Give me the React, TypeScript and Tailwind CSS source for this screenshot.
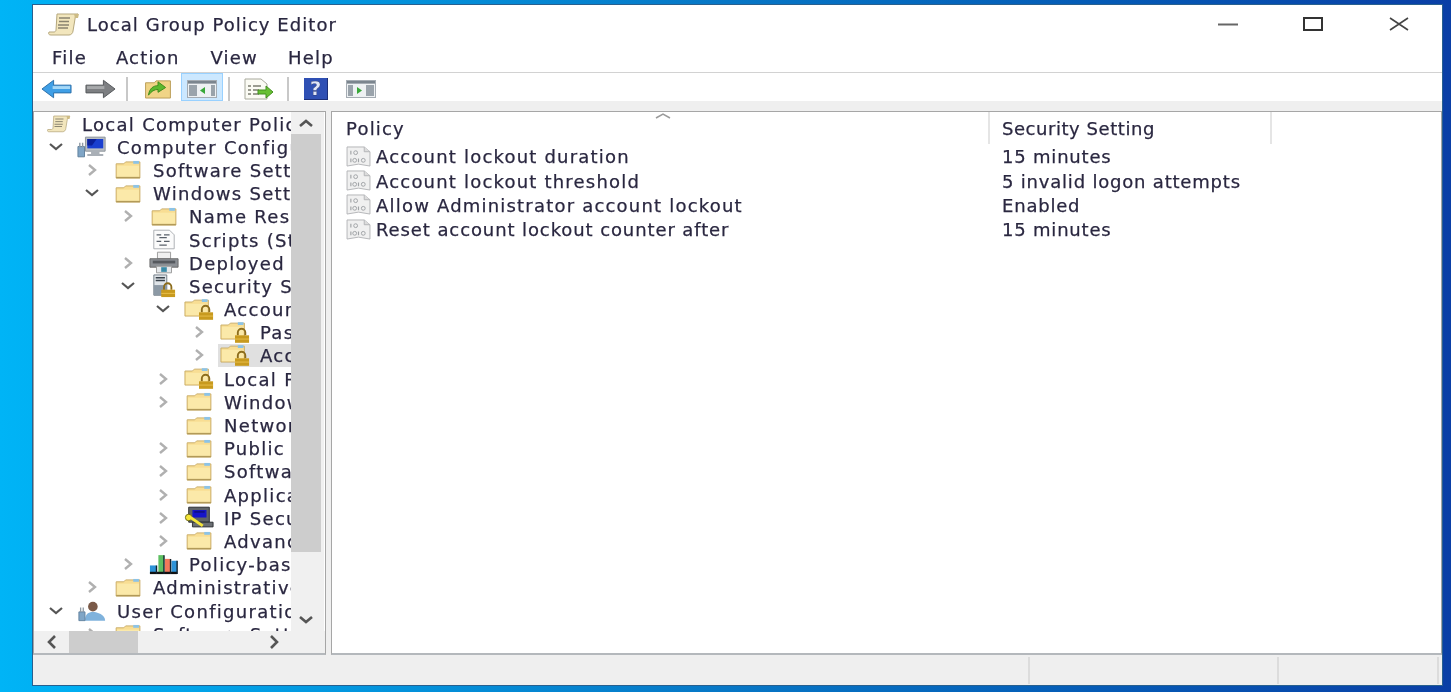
import type { ReactNode } from "react";

type IconName = "folder" | "lock" | "computer" | "scripts" | "printer" | "server" | "ipsec" | "bars" | "user" | "scroll";

type TreeRow = {
  label: string;
  pad: string;
  icon: IconName;
  arrow?: "open" | "closed";
  selected?: boolean;
};

const treeRows: TreeRow[] = [
  { label: "Computer Configuration", pad: "pl-[13px]", icon: "computer", arrow: "open" },
  { label: "Software Settings", pad: "pl-[49px]", icon: "folder", arrow: "closed" },
  { label: "Windows Settings", pad: "pl-[49px]", icon: "folder", arrow: "open" },
  { label: "Name Resolution Policy", pad: "pl-[85px]", icon: "folder", arrow: "closed" },
  { label: "Scripts (Startup/Shutdown)", pad: "pl-[85px]", icon: "scripts" },
  { label: "Deployed Printers", pad: "pl-[85px]", icon: "printer", arrow: "closed" },
  { label: "Security Settings", pad: "pl-[85px]", icon: "server", arrow: "open" },
  { label: "Account Policies", pad: "pl-[120px]", icon: "lock", arrow: "open" },
  { label: "Password Policy", pad: "pl-[156px]", icon: "lock", arrow: "closed" },
  { label: "Account Lockout Policy", pad: "pl-[156px]", icon: "lock", arrow: "closed", selected: true },
  { label: "Local Policies", pad: "pl-[120px]", icon: "lock", arrow: "closed" },
  { label: "Windows Firewall", pad: "pl-[120px]", icon: "folder", arrow: "closed" },
  { label: "Network List Manager", pad: "pl-[120px]", icon: "folder" },
  { label: "Public Key Policies", pad: "pl-[120px]", icon: "folder", arrow: "closed" },
  { label: "Software Restriction", pad: "pl-[120px]", icon: "folder", arrow: "closed" },
  { label: "Application Control", pad: "pl-[120px]", icon: "folder", arrow: "closed" },
  { label: "IP Security Policies", pad: "pl-[120px]", icon: "ipsec", arrow: "closed" },
  { label: "Advanced Audit", pad: "pl-[120px]", icon: "folder", arrow: "closed" },
  { label: "Policy-based QoS", pad: "pl-[85px]", icon: "bars", arrow: "closed" },
  { label: "Administrative Templates", pad: "pl-[49px]", icon: "folder", arrow: "closed" },
  { label: "User Configuration", pad: "pl-[13px]", icon: "user", arrow: "open" },
  { label: "Software Settings", pad: "pl-[49px]", icon: "folder", arrow: "closed" },
];

const policies = [
  { name: "Account lockout duration", value: "15 minutes", spacing: "tracking-[1.2px]" },
  { name: "Account lockout threshold", value: "5 invalid logon attempts", spacing: "tracking-[1.2px]" },
  { name: "Allow Administrator account lockout", value: "Enabled", spacing: "tracking-[1.2px]" },
  { name: "Reset account lockout counter after", value: "15 minutes", spacing: "tracking-[0.9px]" },
];

function ScrollIcon({ className }: { className: string }) {
  return (
    <svg viewBox="0 0 32 24" className={className}>
      <path d="M9 2h21c-2 1-3 3-3 5l-2 12c0 2-2 4-4 4H3c-2 0-3-1-2-3h5c1 0 2-1 2-2z" fill="#f2e6bd" stroke="#b5a77c" />
      <path d="M11 6h11M11 9.500h10M10 13h11M10 16h10" stroke="#8a8470" strokeWidth="1.300" />
      <path d="M26 2h5l-1 4h-3z" fill="#cdbb84" />
    </svg>
  );
}

function Folder() {
  return (
    <svg viewBox="0 0 28 20" className="w-[27px] h-[19px]">
      <path d="M1 4h8l2-2h15v17H1z" fill="#f8dd93" stroke="#c9ad68" />
      <path d="M2 6h23v12H2z" fill="#fbe9a9" />
      <path d="M1 18.500h25" stroke="#b29a58" strokeWidth="1.500" />
      <path d="M19 1h6v3h-6z" fill="#8cc3e6" />
    </svg>
  );
}

function TreeIcon({ name }: { name: IconName }) {
  if (name === "folder") return <Folder />;
  if (name === "lock")
    return (
      <svg viewBox="0 0 32 24" className="w-[30px] h-[23px]">
        <path d="M1 4h8l2-2h15v17H1z" fill="#f8dd93" stroke="#c9ad68" />
        <path d="M2 6h23v12H2z" fill="#fbe9a9" />
        <path d="M19 1h6v3h-6z" fill="#8cc3e6" />
        <path d="M19 15v-3a4 4 0 0 1 8 0v3" fill="none" stroke="#8c6c1c" strokeWidth="2" />
        <path d="M16 15h15v8H16z" fill="#c89a1e" />
        <path d="M16 19h15" stroke="#e9c04d" />
      </svg>
    );
  if (name === "computer")
    return (
      <svg viewBox="0 0 32 24" className="w-[30px] h-[23px]">
        <path d="M9 2h21v15H9z" fill="#b9bec4" stroke="#8b9199" />
        <path d="M11 4h17v10H11z" fill="#1a3fd0" />
        <path d="M11 4l10 0-5 7h-5z" fill="#0b1f9a" />
        <path d="M15 17h9v3h4v2H11v-2h4z" fill="#a9afb6" />
        <path d="M1 12h7v11H1z" fill="#7fa5c6" stroke="#5f7f9b" />
        <path d="M3 8v5M6 8v5" stroke="#8f9aa4" strokeWidth="1.500" />
      </svg>
    );
  if (name === "scripts")
    return (
      <svg viewBox="0 0 28 24" className="w-[26px] h-[23px]">
        <path d="M3 2h17l5 5v15H3z" fill="#fbfbfb" stroke="#a9acb0" />
        <path d="M6 7h5M14 7h6M9 10h8M6 14h5M14 14h6M9 18h8" stroke="#59606a" strokeWidth="1.200" />
      </svg>
    );
  if (name === "printer")
    return (
      <svg viewBox="0 0 32 24" className="w-[31px] h-[23px]">
        <path d="M9 1h14v7H9z" fill="#f0f0f0" stroke="#9a9a9a" />
        <path d="M1 8h30v9H1z" fill="#8b8f94" stroke="#666" />
        <path d="M4 10h24v3H4z" fill="#55595e" />
        <path d="M8 16h16v7H8z" fill="#e6e9ec" stroke="#9a9a9a" />
        <path d="M13 17h6v5h-6z" fill="#3b8ca8" />
      </svg>
    );
  if (name === "server")
    return (
      <svg viewBox="0 0 28 26" className="w-[26px] h-[24px]">
        <path d="M3 1h14v22H3z" fill="#dfe4e8" stroke="#6d7780" />
        <path d="M5 4h10M5 7h10" stroke="#39424b" strokeWidth="1.500" />
        <path d="M3 12h14v11H3z" fill="#8c99a5" />
        <path d="M14 17v-3a4 4 0 0 1 8 0v3" fill="none" stroke="#8c6c1c" strokeWidth="2" />
        <path d="M11 17h15v8H11z" fill="#c89a1e" />
        <path d="M11 21h15" stroke="#e9c04d" />
      </svg>
    );
  if (name === "ipsec")
    return (
      <svg viewBox="0 0 32 24" className="w-[30px] h-[23px]">
        <path d="M5 1h22v16H5z" fill="#5f6468" stroke="#2b2e31" />
        <path d="M9 4h15v8H9z" fill="#1515c9" />
        <path d="M11 5h11v2H11z" fill="#10108a" />
        <path d="M9 17h22v5H9z" fill="#6b6f73" stroke="#2b2e31" />
        <circle cx="5" cy="12" r="3.500" fill="#f5e63a" stroke="#6b6610" />
        <path d="M7 12l13 9" stroke="#f5e63a" strokeWidth="3" />
      </svg>
    );
  if (name === "bars")
    return (
      <svg viewBox="0 0 32 22" className="w-[31px] h-[21px]">
        <path d="M1 12h7v9H1z" fill="#2d93d8" />
        <path d="M10 1h6v20h-6z" fill="#5dbf61" />
        <path d="M17 5h6v16h-6z" fill="#f2795a" />
        <path d="M24 7h6v14h-6z" fill="#2d93d8" />
        <path d="M1 20h29" stroke="#111" strokeWidth="2.500" />
        <path d="M8 12v9M16 1v20M23 5v16M30 7v14" stroke="#10222e" strokeWidth="1.500" />
      </svg>
    );
  if (name === "user")
    return (
      <svg viewBox="0 0 32 24" className="w-[28px] h-[22px]">
        <circle cx="17" cy="7" r="5.500" fill="#7a5a48" />
        <path d="M8 23c0-8 4-10 9-10s14 3 14 10z" fill="#7fb2dc" />
        <path d="M1 13h7v10H1z" fill="#7fa5c6" stroke="#5f7f9b" />
        <path d="M3 8v5M6 8v5" stroke="#8f9aa4" strokeWidth="1.500" />
      </svg>
    );
  return <ScrollIcon className="w-[24px] h-[20px]" />;
}

function Chevron({ open }: { open?: boolean }) {
  return (
    <svg viewBox="0 0 18 12" className="w-[18px] h-[12px]">
      {open ? (
        <path d="M3 3l6 5 6-5" fill="none" stroke="#555" strokeWidth="2.200" />
      ) : (
        <path d="M6 1l6 5-6 5" fill="none" stroke="#b0b0b0" strokeWidth="2.400" />
      )}
    </svg>
  );
}

function ScrollArrow({ d }: { d: string }) {
  return (
    <svg viewBox="0 0 16 16" className="w-[16px] h-[16px]">
      <path d={d} fill="none" stroke="#555" strokeWidth="2.600" />
    </svg>
  );
}

function PolicyIcon() {
  return (
    <svg viewBox="0 0 26 22" className="w-[25px] h-[21px] shrink-0">
      <path d="M1 1h18l6 5v15l-12-2-12 2z" fill="#f0f0f0" stroke="#b3b5b8" />
      <path d="M19 1v5h6" fill="#dcdcdc" stroke="#b3b5b8" />
      <path d="M5 5v4M5 13v4M13 13v4" stroke="#a0a3a6" strokeWidth="1.200" />
      <circle cx="10" cy="7" r="2" fill="none" stroke="#a0a3a6" />
      <circle cx="9" cy="15" r="2" fill="none" stroke="#a0a3a6" />
      <circle cx="18" cy="15" r="2" fill="none" stroke="#a0a3a6" />
    </svg>
  );
}

function ToolButton({ children, className }: { children: ReactNode; className: string }) {
  return <div className={`flex items-center justify-center h-full pt-[3px] ${className}`}>{children}</div>;
}

function Divider({ className }: { className: string }) {
  return <div className={`w-[2px] h-[24px] mt-[3px] bg-[#c8c8c8] ${className}`} />;
}

function Toolbar() {
  return (
    <div className="flex items-center h-[29px] bg-white pl-[9px] border-t border-[#d2d2d2]">
      <ToolButton className="w-[32px] -ml-[2px]">
        <svg viewBox="0 0 32 20" className="w-[31px] h-[20px]">
          <path d="M1 10l12-9v5h18v8H13v5z" fill="#3f9fe6" stroke="#2c6fa8" />
          <path d="M12 7h18v3H12z" fill="#a5d8f7" />
        </svg>
      </ToolButton>
      <ToolButton className="w-[32px] ml-[12px]">
        <svg viewBox="0 0 32 20" className="w-[31px] h-[20px]">
          <path d="M31 10L19 1v5H1v8h18v5z" fill="#7d7f82" stroke="#55585b" />
          <path d="M2 7h18v3H2z" fill="#a7a9ab" />
        </svg>
      </ToolButton>
      <Divider className="ml-[10px]" />
      <ToolButton className="w-[28px] ml-[16px]">
        <svg viewBox="0 0 28 22" className="w-[28px] h-[21px]">
          <path d="M1 5h9l2-2h15v18H1z" fill="#f0d486" stroke="#b99c56" />
          <path d="M4 18c1-7 5-10 10-10V4l8 6-8 5v-3c-4 0-7 2-10 6z" fill="#5cb82e" stroke="#3c8a1a" />
        </svg>
      </ToolButton>
      <ToolButton className="w-[42px] ml-[9px] bg-[#cce8ff] border border-[#99d1ff]">
        <svg viewBox="0 0 30 18" className="w-[30px] h-[18px]">
          <path d="M0 0h30v18H0z" fill="#a5acb3" />
          <path d="M1 4h28v13H1z" fill="#eef1f3" />
          <path d="M1 1h28v2H1z" fill="#7b858e" />
          <path d="M2 5h8v11H2zM24 5h4v11h-4z" fill="#9aa3ab" />
          <path d="M18 7v7l-5-3.500z" fill="#38a838" />
        </svg>
      </ToolButton>
      <Divider className="ml-[5px]" />
      <ToolButton className="w-[30px] ml-[14px]">
        <svg viewBox="0 0 30 22" className="w-[30px] h-[22px]">
          <path d="M1 1h16l6 5v15H1z" fill="#fbfbf4" stroke="#a8a99c" />
          <path d="M4 8h3M9 8h8M4 12h3M9 12h6M4 16h3M9 16h6" stroke="#7c7d70" strokeWidth="1.300" />
          <path d="M14 12h8V8l7 6-7 6v-4h-8z" fill="#68c034" stroke="#43901f" />
        </svg>
      </ToolButton>
      <Divider className="ml-[13px]" />
      <ToolButton className="w-[24px] ml-[15px]">
        <div className="flex items-center justify-center w-[24px] h-[22px] bg-[#2f50b4] border-b border-r border-[#1c2f78] text-[#dfe6fa] text-[20px] font-bold leading-none">
          ?
        </div>
      </ToolButton>
      <ToolButton className="w-[30px] ml-[18px]">
        <svg viewBox="0 0 30 18" className="w-[30px] h-[18px]">
          <path d="M0 0h30v18H0z" fill="#a5acb3" />
          <path d="M1 4h28v13H1z" fill="#eef1f3" />
          <path d="M1 1h28v2H1z" fill="#7b858e" />
          <path d="M2 5h5v11H2zM20 5h8v11h-8z" fill="#9aa3ab" />
          <path d="M11 7v7l5-3.500z" fill="#38a838" />
        </svg>
      </ToolButton>
    </div>
  );
}

function TreePane() {
  return (
    <div className="flex flex-col w-[293px] bg-white border border-[#a6a6a6] border-b-2 border-b-[#b4b8bc] overflow-hidden">
      <div className="flex flex-1 min-h-0">
        <div className="w-[257px] overflow-hidden shrink-0 tracking-[1.3px]">
          <div className="flex items-center h-[23.2px] pl-[13px] whitespace-nowrap">
            <ScrollIcon className="w-[24px] h-[21px] shrink-0" />
            <span className="ml-[11px] pt-[1px]">Local Computer Policy</span>
          </div>
          {treeRows.map((row, i) => (
            <div key={i} className={`flex items-center h-[23.2px] whitespace-nowrap ${row.pad}`}>
              <div className="w-[18px] shrink-0 flex items-center justify-center">
                {row.arrow && <Chevron open={row.arrow === "open"} />}
              </div>
              <div className={`flex items-center h-[23px] ml-[10px] pl-[2px] flex-1 ${row.selected ? "bg-[#e0e0e0]" : ""}`}>
                <div className="w-[30px] mr-[10px] shrink-0 flex items-center justify-center">
                  <TreeIcon name={row.icon} />
                </div>
                <span className="pt-[1px]">{row.label}</span>
              </div>
            </div>
          ))}
        </div>
        <div className="flex flex-col w-[33px] bg-[#f0f0f0] pr-[3px]">
          <div className="flex items-center justify-center h-[22px]">
            <ScrollArrow d="M2 11l6-5 6 5" />
          </div>
          <div className="h-[418px] bg-[#cdcdcd]" />
          <div className="flex-1" />
          <div className="flex items-center justify-center h-[22px]">
            <ScrollArrow d="M2 5l6 5 6-5" />
          </div>
        </div>
      </div>
      <div className="flex items-center h-[22px] bg-[#f0f0f0] pr-[43px]">
        <div className="w-[35px] flex justify-center">
          <ScrollArrow d="M11 2L5 8l6 6" />
        </div>
        <div className="w-[69px] h-full bg-[#cdcdcd]" />
        <div className="flex-1" />
        <ScrollArrow d="M5 2l6 6-6 6" />
      </div>
    </div>
  );
}

function ListPane() {
  return (
    <div className="relative flex-1 bg-white border border-[#a6a6a6] border-b-2 border-b-[#b4b8bc]">
      <div className="absolute left-[323px] top-[1px]">
        <svg viewBox="0 0 16 6" className="w-[16px] h-[6px]">
          <path d="M1 5l7-4 7 4" fill="none" stroke="#9a9a9a" strokeWidth="1.500" />
        </svg>
      </div>
      <div className="flex h-[32px]">
        <div className="w-[658px] pl-[14px] flex items-center border-r-2 border-[#e5e5e5] tracking-[1.2px]">Policy</div>
        <div className="w-[282px] pl-[12px] flex items-center border-r-2 border-[#e5e5e5] tracking-[0.55px]">Security Setting</div>
      </div>
      {policies.map((p) => (
        <div key={p.name} className="flex items-center h-[24.400px]">
          <div className={`w-[658px] pl-[14px] flex items-center gap-[5px] ${p.spacing}`}>
            <PolicyIcon />
            <span className="pt-[1px]">{p.name}</span>
          </div>
          <div className="pl-[12px] pt-[1px] tracking-[0.8px]">{p.value}</div>
        </div>
      ))}
    </div>
  );
}

export default function App() {
  return (
    <div className="h-[692px] w-[1451px] overflow-hidden pt-[4px] pl-[32px] pr-[8px] pb-[6px] bg-linear-to-r from-[#00b4f6] via-[#0777c6] to-[#0a3fa6]">
      <div className="flex flex-col h-full bg-white border border-[#28608f] text-[18px] text-[#2a2740] font-['DejaVu_Sans',sans-serif] [-webkit-text-stroke:0.25px_#2a2740] blur-[0.5px]">
        <div className="flex items-center h-[38px] shrink-0">
          <ScrollIcon className="ml-[15px] w-[32px] h-[24px]" />
          <span className="ml-[7px] pt-[1px] tracking-[1.05px]">Local Group Policy Editor</span>
          <div className="flex-1" />
          <svg viewBox="0 0 20 3" className="w-[20px] h-[3px]">
            <path d="M0 1.500h20" stroke="#666" strokeWidth="2" />
          </svg>
          <svg viewBox="0 0 20 14" className="ml-[65px] w-[20px] h-[14px]">
            <path d="M1 1h18v12H1z" fill="none" stroke="#333" strokeWidth="2" />
          </svg>
          <svg viewBox="0 0 20 14" className="ml-[66px] mr-[33px] w-[20px] h-[14px]">
            <path d="M1 1l18 12M19 1L1 13" stroke="#444" strokeWidth="1.600" />
          </svg>
        </div>
        <div className="flex items-center h-[29px] shrink-0 pl-[19px] tracking-[1.2px]">
          <span>File</span>
          <span className="ml-[29px]">Action</span>
          <span className="ml-[31px]">View</span>
          <span className="ml-[30px]">Help</span>
        </div>
        <Toolbar />
        <div className="flex flex-col flex-1 min-h-0 bg-[#efefef]">
          <div className="flex flex-1 min-h-0 pt-[10px] gap-[5px]">
            <TreePane />
            <ListPane />
          </div>
          <div className="flex h-[30px] shrink-0 justify-end pb-[1px]">
            <div className="w-[249px] mt-[2px] border-l-2 border-[#dcdcdc]" />
            <div className="w-[160px] mt-[2px] border-l-2 border-[#dcdcdc]" />
            <div className="w-[5px] mt-[2px] border-l-2 border-[#dcdcdc]" />
          </div>
        </div>
      </div>
    </div>
  );
}
